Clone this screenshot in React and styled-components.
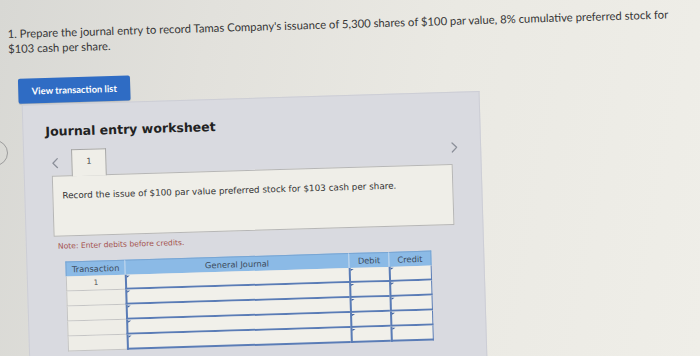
import React from 'react';
import styled, { createGlobalStyle } from 'styled-components';

const GlobalStyle = createGlobalStyle`
  html, body {
    margin: 0;
    padding: 0;
  }
  body {
    background: #e6e5df;
  }
`;

const Page = styled.div`
  position: relative;
  width: 700px;
  height: 356px;
  overflow: hidden;
  background: linear-gradient(100deg, #d8d8d4 0%, #e2e1dc 28%, #eae9e3 60%, #efeee8 100%);
`;

// the photo is taken at a slight angle, so the whole sheet leans a little
const Sheet = styled.div`
  width: 700px;
  box-sizing: border-box;
  padding-top: 17px;
  transform: rotate(-1.7deg);
  transform-origin: 350px 178px;
`;

const Question = styled.p`
  margin: 0 0 0 12px;
  width: 665px;
  font-family: Lato, "Open Sans", sans-serif;
  font-size: 11.3px;
  line-height: 14.5px;
  color: #363636;
`;

const PrimaryButton = styled.button`
  display: block;
  margin: 23px 0 0 21px;
  width: 112px;
  height: 25px;
  padding: 0;
  border: none;
  border-radius: 2px;
  background: #2f6cc4;
  color: #fff;
  font-family: Lato, sans-serif;
  font-weight: 700;
  font-size: 9.4px;
  box-shadow: 0 1px 1px rgba(0, 0, 0, 0.15);
`;

const Panel = styled.section`
  margin: 1px 0 0 24px;
  width: 458px;
  height: 340px;
  box-sizing: border-box;
  padding-top: 19px;
  background: #d9dae0;
  border: 1px solid #cdced5;
  border-bottom: none;
`;

const Title = styled.h2`
  margin: 0 0 0 22px;
  font-family: "DejaVu Sans", Verdana, sans-serif;
  font-weight: 700;
  font-size: 12.5px;
  line-height: 16px;
  color: #222;
`;

const TabRow = styled.div`
  display: flex;
  margin: 10px 0 0 27px;
  width: 408px;
  height: 26px;
`;

const ArrowSlot = styled.div`
  width: ${p => p.$w}px;
  padding-top: ${p => p.$top}px;
  box-sizing: border-box;
`;

const Chevron = ({ dir }) => (
  <svg width="7" height="11" viewBox="0 0 7 11">
    <polyline
      points={dir === 'left' ? '6,1 1.5,5.5 6,10' : '1,1 5.5,5.5 1,10'}
      fill="none"
      stroke="#8c909a"
      strokeWidth="1.3"
      strokeLinecap="round"
      strokeLinejoin="round"
    />
  </svg>
);

const Tab = styled.div`
  position: relative;
  z-index: 1;
  width: 35px;
  height: 27px;
  box-sizing: border-box;
  padding-top: 7px;
  text-align: center;
  background: #efeee8;
  border: 1px solid #a6a6a6;
  border-bottom: none;
  font-family: "DejaVu Sans", sans-serif;
  font-size: 8px;
  line-height: 10px;
  color: #444;
`;

const Spacer = styled.div`
  flex: 1;
`;

const EntryBox = styled.div`
  margin-left: 27px;
  width: 401px;
  height: 61px;
  box-sizing: border-box;
  padding: 14px 9px 0;
  background: #efeee8;
  border: 1px solid #b6b6b6;
  font-family: "DejaVu Sans", sans-serif;
  font-size: 8.8px;
  line-height: 10px;
  color: #333;
`;

const Note = styled.div`
  margin: 5px 0 0 31px;
  font-family: "DejaVu Sans", sans-serif;
  font-size: 7.6px;
  line-height: 10px;
  color: #a4524e;
`;

const Table = styled.div`
  display: grid;
  grid-template-columns: 59px 224px 40px 43px;
  grid-template-rows: 15px;
  grid-auto-rows: 15px;
  margin: 10px 0 0 38px;
`;

const HeadCell = styled.div`
  display: flex;
  align-items: center;
  justify-content: center;
  background: #8bbae6;
  border-top: 1px solid #78a5d3;
  border-left: 1px solid ${p => (p.$first ? '#78a5d3' : '#c3d9ef')};
  border-right: ${p => (p.$last ? '1px solid #78a5d3' : 'none')};
  font-family: "DejaVu Sans", sans-serif;
  font-size: 8.3px;
  color: #3b4a5b;
`;

const TxCell = styled.div`
  display: flex;
  align-items: center;
  justify-content: center;
  background: #eeede7;
  border-left: 1px solid #c4c4c4;
  border-bottom: 1px solid #c4c4c4;
  font-family: "DejaVu Sans", sans-serif;
  font-size: 7px;
  color: #555;
`;

const InputCell = styled.div`
  position: relative;
  background: #f1f0ea;
  border-left: 2px solid #5a7cb6;
  border-bottom: 2px solid #5a7cb6;
  border-right: ${p => (p.$last ? '1px solid #5a7cb6' : 'none')};

  &::before {
    content: '';
    position: absolute;
    left: 0;
    top: 1px;
    border-top: 2px solid #3f62a0;
    border-right: 3px solid transparent;
  }
`;

const SideCircle = styled.div`
  position: absolute;
  left: -18px;
  top: 140px;
  width: 24px;
  height: 24px;
  border: 1px solid #9c9c9c;
  border-radius: 50%;
`;

const rows = ['1', '', '', '', ''];

export default function App() {
  return (
    <Page>
      <GlobalStyle />
      <SideCircle />
      <Sheet>
        <Question>
          1. Prepare the journal entry to record Tamas Company's issuance of 5,300 shares of $100 par value, 8% cumulative preferred stock for $103 cash per share.
        </Question>
        <PrimaryButton>View transaction list</PrimaryButton>
        <Panel>
          <Title>Journal entry worksheet</Title>
          <TabRow>
            <ArrowSlot $w={20} $top={5}>
              <Chevron dir="left" />
            </ArrowSlot>
            <Tab>1</Tab>
            <Spacer />
            <ArrowSlot $w={8} $top={1}>
              <Chevron dir="right" />
            </ArrowSlot>
          </TabRow>
          <EntryBox>Record the issue of $100 par value preferred stock for $103 cash per share.</EntryBox>
          <Note>Note: Enter debits before credits.</Note>
          <Table>
            <HeadCell $first>Transaction</HeadCell>
            <HeadCell>General Journal</HeadCell>
            <HeadCell>Debit</HeadCell>
            <HeadCell $last>Credit</HeadCell>
            {rows.map((r, i) => (
              <React.Fragment key={i}>
                <TxCell>{r}</TxCell>
                <InputCell />
                <InputCell />
                <InputCell $last />
              </React.Fragment>
            ))}
          </Table>
        </Panel>
      </Sheet>
    </Page>
  );
}
